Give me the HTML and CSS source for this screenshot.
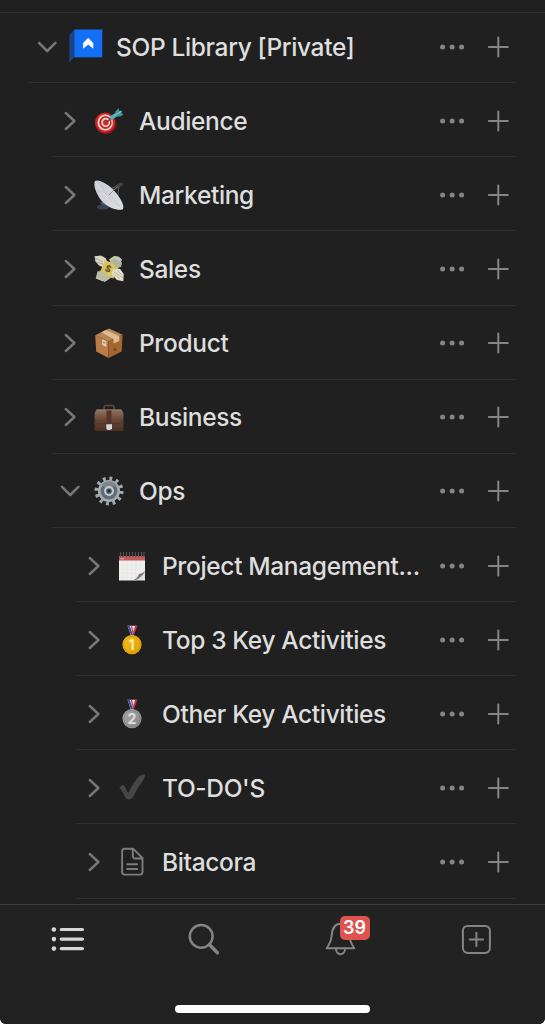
FILE: index.html
```html
<!DOCTYPE html>
<html lang="en">
<head>
<meta charset="UTF-8">
<meta name="viewport" content="width=device-width, initial-scale=1.0">
<title>SOP Library</title>

<link rel="stylesheet" href="styles.css">
</head>

<body>

<svg class="defs" width="0" height="0">
    <symbol id="right" viewBox="0 0 20 20"><path d="M5.8 2 L14.4 10 L5.8 18"/></symbol>
    <symbol id="down" viewBox="0 0 20 20"><path d="M2 5.8 L10.2 14 L18.4 5.8"/></symbol>
    <symbol id="dots" viewBox="0 0 26 24"><circle cx="3.6" cy="12" r="2.5"/><circle cx="13.1" cy="12" r="2.5"/><circle cx="22.6" cy="12" r="2.5"/></symbol>
    <symbol id="plus" viewBox="0 0 24 24"><path d="M12.3 2.4V21.4M2.8 11.9H21.8"/></symbol>
    <linearGradient id="dish" x1="0" y1="0" x2="1" y2="1"><stop offset="0" stop-color="#c9cbd2"/><stop offset="1" stop-color="#dddee2"/></linearGradient>
    <linearGradient id="leather" x1="0" y1="0" x2="0" y2="1"><stop offset="0" stop-color="#94725f"/><stop offset=".5" stop-color="#684636"/><stop offset="1" stop-color="#4b2e22"/></linearGradient>
    <linearGradient id="gold" x1="0" y1="0" x2="1" y2="1"><stop offset="0" stop-color="#f7c01c"/><stop offset="1" stop-color="#e09d08"/></linearGradient>
    <linearGradient id="silver" x1="0" y1="0" x2="1" y2="1"><stop offset="0" stop-color="#a9a9a9"/><stop offset="1" stop-color="#858585"/></linearGradient>
</svg>

<div class="app">

<div class="top"></div>

<div class="tree">

<div class="row first">
    <svg class="chevron"><use href="#down"/></svg>
    <svg class="icon logo" viewBox="0 0 34 34">
        <path d="M0.3 6 L5.5 0.5 V28 L0.3 33.5Z" fill="#1d4387"/>
        <path d="M5.3 0.5H33.3V28.3H5.3Z" fill="#136ff5"/>
        <path d="M19.2 9.2 L24 14 V19.2 L19.2 15.3 L14.4 19.2 V14Z" fill="#fff" stroke="#fff" stroke-width=".6"/>
    </svg>
    <span class="name">SOP Library [Private]</span>
    <svg class="dots"><use href="#dots"/></svg>
    <svg class="plus"><use href="#plus"/></svg>
</div>

<div class="row l2">
    <svg class="chevron"><use href="#right"/></svg>
    <svg class="icon" viewBox="0 0 30 30">
        <ellipse cx="12" cy="17.6" rx="10.3" ry="10.6" fill="#8d1519"/>
        <ellipse cx="11" cy="16.6" rx="10" ry="10.2" fill="#d72427"/>
        <ellipse cx="11.3" cy="16.5" rx="7.7" ry="8" fill="#f0ded8"/>
        <ellipse cx="11.5" cy="16.5" rx="6.2" ry="6.4" fill="#c7282a"/>
        <ellipse cx="11.7" cy="16.4" rx="4.4" ry="4.6" fill="#f0d8d2"/>
        <ellipse cx="11.8" cy="16.4" rx="2.8" ry="3" fill="#ca2c2a"/>
        <path d="M12 16.2 L18 12" stroke="#643d42" stroke-width="1.3"/>
        <path d="M16.2 12.6 L24.5 7.2" stroke="#54aeb9" stroke-width="3.8"/>
        <path d="M21 8.6 L21.5 5.4 L24.6 2.2 L25.4 5.4 L28.4 5.2 L27.2 7 L29.6 8.2 L26.3 10.4 L22.5 10.4Z" fill="#4595a0"/>
        <path d="M21 9.4 L27.4 4.9" stroke="#79c9cd" stroke-width="1.2"/>
    </svg>
    <span class="name">Audience</span>
    <svg class="dots"><use href="#dots"/></svg>
    <svg class="plus"><use href="#plus"/></svg>
</div>

<div class="row l2">
    <svg class="chevron"><use href="#right"/></svg>
    <svg class="icon" viewBox="0 0 30 30">
        <path d="M6 23 L11 20 L13 28Z" fill="#56606c"/>
        <ellipse cx="9" cy="27.2" rx="6" ry="2.6" fill="#364354"/>
        <path d="M17 9 L27.6 3 M25 5 L23.8 16 M19 10 L26 6" stroke="#54585c" stroke-width="1.1" fill="none"/>
        <path d="M22.5 4.5 L28.5 2.7 L29 5 L25 7Z" fill="#414547"/>
        <path d="M1 1 C4.5 -1.5 15 4.2 21.5 12.2 C28.5 20.5 30.9 27.8 28.3 29.3 C25.6 31 15 28.7 8.8 22 C2.2 14.9 -1.2 4.4 1 1Z" fill="url(#dish)"/>
        <path d="M1.6 2 C4 8 17 23 28.5 29" stroke="#e3e3e8" stroke-width="1" fill="none"/>
        <path d="M8 4.5 C11 15 16 22 27 27 M3 10 C12 12 22 20 27 28" stroke="#bdbfc7" stroke-width=".5" fill="none"/>
        <path d="M15 15 L23.5 6.5" stroke="#777d83" stroke-width=".8"/>
    </svg>
    <span class="name">Marketing</span>
    <svg class="dots"><use href="#dots"/></svg>
    <svg class="plus"><use href="#plus"/></svg>
</div>

<div class="row l2">
    <svg class="chevron"><use href="#right"/></svg>
    <svg class="icon" viewBox="0 0 30 30">
        <path d="M.5 2.2 L7 1.6 L11.5 4 L13 7 L9 13.2 L5 11.5 L1.5 7.6Z" fill="#d9d6c3"/>
        <path d="M1 4 L9 8 M2 8 L9 10" stroke="#99998c" stroke-width=".7"/>
        <path d="M15 5.5 L20 2 L24.5 2.6 L28 5.4 L25.5 11 L20.5 14.2Z" fill="#c6c8b6"/>
        <path d="M11 6.2 L25.8 11.3 L19.4 24.6 L5 20.2Z" fill="#d8c264"/>
        <path d="M16.5 6.6 L20.5 4.5 L28 8.6 L27 13 L22.3 13.6Z" fill="#b1b5a0"/>
        <path d="M3.8 16.8 L10.7 21.8 L9.2 27.5 L1.7 24.5Z" fill="#c5c8ae"/>
        <path d="M5.6 16.6 L12.5 20.8 L16.8 24 L10.7 27.9 L2.6 23Z" fill="#b9bda6"/>
        <path d="M18.8 15.4 L26 14.8 L29.7 20 L29.3 27.3 L23 26 L17.8 20.5Z" fill="#e2decb"/>
        <path d="M20 18 L29 24 M19.5 20 L26 25 M23 16 L28 21" stroke="#aaa996" stroke-width=".7"/>
        <text x="14" y="17.6" class="dollar" transform="rotate(23 13 15)">$</text>
    </svg>
    <span class="name">Sales</span>
    <svg class="dots"><use href="#dots"/></svg>
    <svg class="plus"><use href="#plus"/></svg>
</div>

<div class="row l2">
    <svg class="chevron"><use href="#right"/></svg>
    <svg class="icon" viewBox="0 0 30 30">
        <path d="M1.2 7.3 L14.5 13.3 V30 L2.2 23.4Z" fill="#ba7c46"/>
        <path d="M14.5 13.3 L28.6 6.8 L27.7 23.6 L14.5 30Z" fill="#a5652f"/>
        <path d="M1.2 7.3 L15 .5 L28.6 6.8 L14.5 13.3Z" fill="#bd8452"/>
        <path d="M7.3 4.2 L11.7 2.1 L25.3 8.3 V13 L19.5 15.4 V11Z" fill="#dbbd93"/>
        <path d="M8.2 11.3 L12.3 13.1 V19 L8.2 17Z" fill="#d8d1c4"/>
        <path d="M9.2 13 L11.3 14 V16 L9.2 15Z" fill="#a79b8d"/>
        <circle cx="21" cy="21.5" r="1.5" fill="#784523"/>
        <path d="M14.5 13.5V30" stroke="#814d24" stroke-width=".5"/>
    </svg>
    <span class="name">Product</span>
    <svg class="dots"><use href="#dots"/></svg>
    <svg class="plus"><use href="#plus"/></svg>
</div>

<div class="row l2">
    <svg class="chevron"><use href="#right"/></svg>
    <svg class="icon" viewBox="0 0 30 30">
        <path d="M10 8 V5.5 Q10 3.5 12 3.5 H18 Q20 3.5 20 5.5 V8" fill="none" stroke="#60473b" stroke-width="1.5"/>
        <path d="M2.6 7.6H27.4L29.4 11V27.5Q29.4 29 28 29H2Q.6 29 .6 27.5V11Z" fill="url(#leather)"/>
        <path d="M.8 18 Q2 21.6 5 21.6H25Q28 21.6 29.2 18" stroke="#4a3025" stroke-width=".6" fill="none"/>
        <path d="M12.5 8H17.5V23H12.5Z" fill="#553528"/>
        <path d="M12.3 22.3H18V27.3H16.8L16 28.1H14L12.3 27.1Z" fill="#d8d7d5"/>
        <path d="M2.8 8H27.3" stroke="#a28574" stroke-width=".7"/>
    </svg>
    <span class="name">Business</span>
    <svg class="dots"><use href="#dots"/></svg>
    <svg class="plus"><use href="#plus"/></svg>
</div>

<div class="row l2">
    <svg class="chevron"><use href="#down"/></svg>
    <svg class="icon" viewBox="0 0 30 30">
        <circle cx="15" cy="15" r="12.6" fill="none" stroke="#a1a9b2" stroke-width="3.8" stroke-dasharray="2.9 3.7"/>
        <circle cx="15" cy="15" r="9.8" fill="#626d7a" stroke="#a5adb6" stroke-width="2.5"/>
        <path d="M7.5 9 A9.5 9.5 0 0 1 22.5 9 L18 12 H12Z" fill="#7c868f"/>
        <circle cx="15" cy="15" r="3.9" fill="#455461" stroke="#c5cbd0" stroke-width="2.1"/>
        <circle cx="15" cy="15" r="1.3" fill="#262c32"/>
    </svg>
    <span class="name">Ops</span>
    <svg class="dots"><use href="#dots"/></svg>
    <svg class="plus"><use href="#plus"/></svg>
</div>

<div class="row l3">
    <svg class="chevron"><use href="#right"/></svg>
    <svg class="icon" viewBox="0 0 30 30">
        <path d="M2 5H28V21L18 29.5H2Z" fill="#eeeeed"/>
        <path d="M2 5H28V9.5H2Z" fill="#c25859"/>
        <path d="M3.5 7.8H7" stroke="#e7b2af"/>
        <path d="M3.5 1V6M6.5 1V6M9.5 1V6M12.5 1V6M15.5 1V6M18.5 1V6M21.5 1V6M24.5 1V6M27 1V6" stroke="#555" stroke-width="1.1"/>
        <path d="M2 14.5H28M2 18.5H28M2 22.5H26M2 26.5H21M6 10V29M10.3 10V29M14.6 10V29M18.9 10V27M23.2 10V23" stroke="#e3e3e3" stroke-width=".5"/>
        <path d="M28 20 V29.5 H17 Q20 28 21.5 23.3 Q25.5 24 28 20Z" fill="#dfdfdf"/>
        <path d="M28 19.8 Q25.5 23.2 22 23 Q20.5 27.5 15.5 29.5 Q22 28.5 24.3 25.2 Q26.8 23.8 28 19.8Z" fill="#777978"/>
    </svg>
    <span class="name">Project Management...</span>
    <svg class="dots"><use href="#dots"/></svg>
    <svg class="plus"><use href="#plus"/></svg>
</div>

<div class="row l3">
    <svg class="chevron"><use href="#right"/></svg>
    <svg class="icon" viewBox="0 0 30 30">
        <path d="M10.5 .7H19.5L16.5 11H14Z" fill="#e4dfe4"/>
        <path d="M10.5 .7H12.6L16 10H14Z" fill="#354a9b"/>
        <path d="M13.8 .7H15L16.8 8L16 10Z" fill="#c83549"/>
        <path d="M18.2 .7H20.5L17 10H15.5Z" fill="#be3247"/>
        <circle cx="15" cy="19.6" r="9.6" fill="url(#gold)"/>
        <circle cx="15" cy="19.6" r="8.2" fill="none" stroke="#d58f08" stroke-width=".7"/>
        <text x="14.6" y="24.6" class="medal first-place">1</text>
    </svg>
    <span class="name">Top 3 Key Activities</span>
    <svg class="dots"><use href="#dots"/></svg>
    <svg class="plus"><use href="#plus"/></svg>
</div>

<div class="row l3">
    <svg class="chevron"><use href="#right"/></svg>
    <svg class="icon" viewBox="0 0 30 30">
        <path d="M10.5 .7H19.5L16.5 11H14Z" fill="#e4dfe4"/>
        <path d="M10.5 .7H12.6L16 10H14Z" fill="#354a9b"/>
        <path d="M13.8 .7H15L16.8 8L16 10Z" fill="#c83549"/>
        <path d="M18.2 .7H20.5L17 10H15.5Z" fill="#be3247"/>
        <circle cx="15" cy="19.6" r="9.6" fill="url(#silver)"/>
        <circle cx="15" cy="19.6" r="8.2" fill="none" stroke="#818181" stroke-width=".7"/>
        <text x="15" y="24.6" class="medal">2</text>
    </svg>
    <span class="name">Other Key Activities</span>
    <svg class="dots"><use href="#dots"/></svg>
    <svg class="plus"><use href="#plus"/></svg>
</div>

<div class="row l3">
    <svg class="chevron"><use href="#right"/></svg>
    <svg class="icon" viewBox="0 0 30 30">
        <path d="M2.3 14.5 Q4.2 12.2 7 12.3 L11.2 20.2 Q16.5 9 23 2.6 Q25.5 1.2 28.4 1.7 Q28 4.5 25.4 8.3 Q20.5 14.7 16.7 22.8 Q15 26.7 12 26.6 Q9.4 26.5 7.8 23.6 Q5.5 17.5 2.3 14.5Z" fill="#464646"/>
    </svg>
    <span class="name">TO-DO'S</span>
    <svg class="dots"><use href="#dots"/></svg>
    <svg class="plus"><use href="#plus"/></svg>
</div>

<div class="row l3">
    <svg class="chevron"><use href="#right"/></svg>
    <svg class="icon page" viewBox="0 0 30 30">
        <path d="M7.7 1.8H16.3L25.5 11V25Q25.5 27.6 22.9 27.6H7.7Q5.1 27.6 5.1 25V4.4Q5.1 1.8 7.7 1.8Z"/>
        <path d="M15.8 2V9Q15.8 11.5 18.3 11.5H25.3M10.2 17.3H20.2M10.2 22H20.2"/>
    </svg>
    <span class="name">Bitacora</span>
    <svg class="dots"><use href="#dots"/></svg>
    <svg class="plus"><use href="#plus"/></svg>
</div>

</div>

<div class="tabs">
    <div class="tab active">
        <svg width="34" height="34" viewBox="0 0 34 34">
            <path d="M10.2 7.5H31.5M10.2 17.1H31.5M10.2 26.6H31.5"/>
            <circle cx="2.9" cy="7.5" r="2.3"/><circle cx="2.9" cy="17.1" r="2.3"/><circle cx="2.9" cy="26.6" r="2.3"/>
        </svg>
    </div>
    <div class="tab">
        <svg width="34" height="34" viewBox="0 0 34 34">
            <circle cx="14.2" cy="14.4" r="11.4" stroke-width="2.4"/>
            <path d="M22.5 22.8L30.4 30.7" stroke-width="3.4"/>
        </svg>
    </div>
    <div class="tab">
        <svg width="34" height="34" viewBox="0 0 34 34">
            <path d="M2.7 26.3H30.3C27 21.5 25.8 19 25.3 13.5C24.8 6 21.5 1.7 16.5 1.7C11.5 1.7 8.2 6 7.7 13.5C7.2 19 6 21.5 2.7 26.3Z"/>
            <path d="M12 26.5C12 34 21 34 21 26.5"/>
        </svg>
        <span class="badge">39</span>
    </div>
    <div class="tab">
        <svg width="34" height="34" viewBox="0 0 34 34">
            <rect x="2.9" y="3.9" width="27" height="27" rx="4.8"/>
            <path d="M16.4 10.7V24.1M9.7 17.4H23.1"/>
        </svg>
    </div>
</div>

<div class="home"></div>

</div>

</body>
</html>
```

FILE: styles.css
```css
*{
    box-sizing:border-box;
}

body{
    margin:0;
    font-family:Inter,"Liberation Sans",sans-serif;
    background:white;
    color:#dedede;
    overflow:hidden;
}

.defs{
    position:absolute;
}

.app{
    height:1024px;
    background:#202020;
    border-radius:0 0 6px 6px;
    display:flex;
    flex-direction:column;
    overflow:hidden;
}

.top{
    height:13px;
    border-bottom:1px solid #333;
}

.tree{
    height:891px;
    padding-right:29px;
}

.row{
    height:74.13px;
    padding-top:2px;
    border-bottom:1px solid #2e2e2e;
    display:flex;
    align-items:center;
}

.first{
    height:70.2px;
    margin-left:28px;
    padding-top:0;
    padding-bottom:1px;
}

.l2{
    margin-left:52px;
}

.l3{
    margin-left:76px;
}

.chevron{
    width:20px;
    height:20px;
    margin-left:8px;
    fill:none;
    stroke:#777;
    stroke-width:2.5;
    stroke-linecap:round;
    stroke-linejoin:round;
}

.first .chevron{
    margin-left:9px;
}

.icon{
    width:30px;
    height:30px;
    margin-left:14px;
}

.l3 .icon{
    margin-left:13px;
}

.logo{
    width:34px;
    height:34px;
    margin-left:12px;
    margin-bottom:3px;
}

.name{
    flex:1;
    margin-left:15px;
    font-size:24.5px;
    font-weight:450;
    line-height:32px;
    letter-spacing:-.35px;
    white-space:nowrap;
}

.first .name{
    margin-left:13px;
}

.dots{
    width:26px;
    height:24px;
    fill:#858585;
}

.plus{
    width:24px;
    height:24px;
    margin:0 6px 0 21px;
    stroke:#858585;
    stroke-width:2;
    stroke-linecap:round;
}

.dollar{
    font-size:9px;
    font-weight:bold;
    fill:#61511f;
    text-anchor:middle;
}

.medal{
    font-size:14px;
    font-weight:bold;
    fill:#dedede;
    text-anchor:middle;
}

.first-place{
    fill:#ffeeaa;
}

.page{
    fill:none;
    stroke:#7c7c7c;
    stroke-width:1.9;
    stroke-linecap:round;
    stroke-linejoin:round;
}

.tabs{
    height:101px;
    padding-top:17px;
    background:#222;
    border-top:1px solid #3b3b3b;
    display:flex;
}

.tab{
    flex:1;
    display:flex;
    justify-content:center;
    align-items:flex-start;
    position:relative;
}

.tab svg{
    fill:none;
    stroke:#858585;
    stroke-width:2;
    stroke-linecap:round;
    stroke-linejoin:round;
}

.tab.active path{
    stroke:#d8d5d5;
    stroke-width:3.1;
}

.tab.active circle{
    fill:#d8d5d5;
    stroke:none;
}

.badge{
    position:absolute;
    left:67px;
    top:-6px;
    width:30px;
    height:24px;
    border-radius:5px;
    background:#dd5350;
    color:white;
    font-size:18px;
    font-weight:600;
    line-height:24px;
    text-align:center;
}

.home{
    background:#222;
    flex:1;
    display:flex;
    justify-content:center;
}

.home::before{
    content:"";
    width:195px;
    height:8px;
    border-radius:4px;
    background:white;
}
```
